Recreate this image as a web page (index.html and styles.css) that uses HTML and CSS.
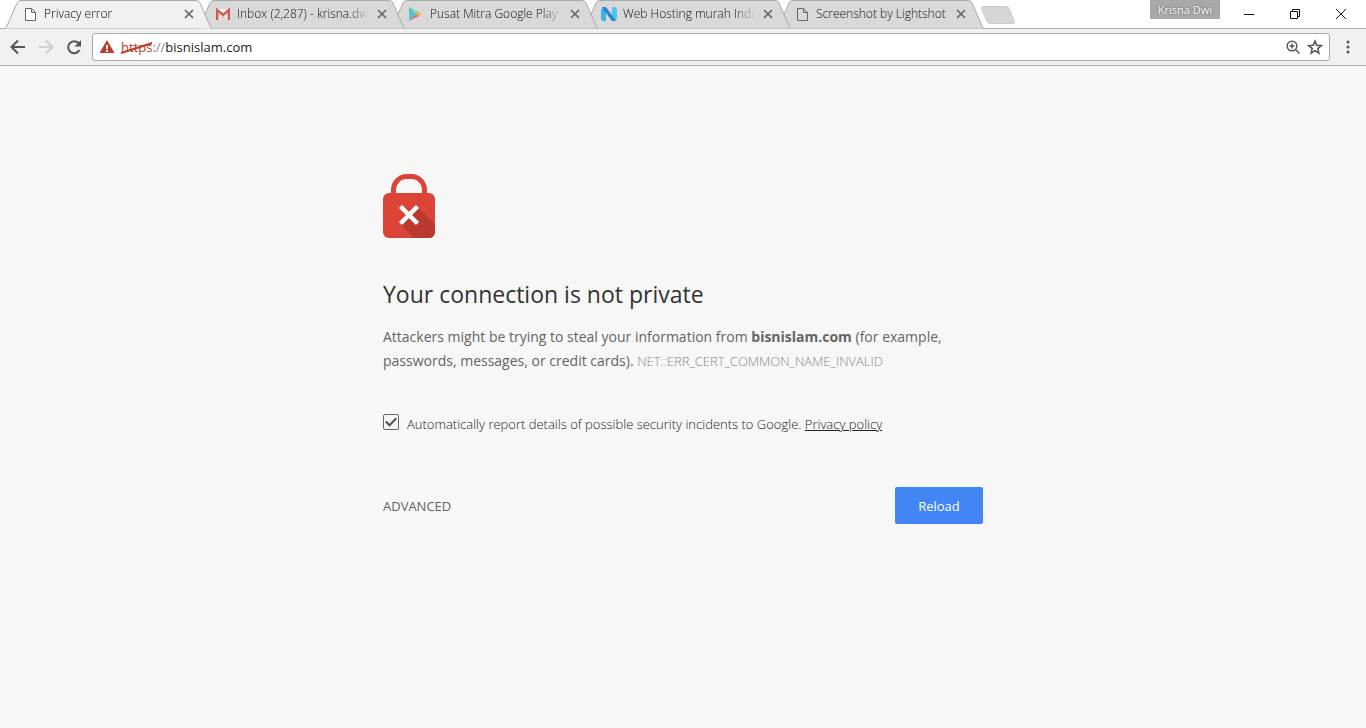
FILE: index.html
```html
<!DOCTYPE html>
<html lang="en">
	<head>
		<meta charset="utf-8">
		<title>Privacy error</title>
		<link rel="stylesheet" href="styles.css">
	</head>

	<body>
		<header class="browser">
			<div class="tab-strip">
				<div class="tabs">
					<div class="tab active">
						<svg class="tab-shape" viewBox="0 0 207 29" preserveAspectRatio="none"><path d="M0 28.5 Q1 28 2 26 L12 3 Q13 .5 16 .5 H191 Q194 .5 195 3 L205 26 Q206 28 207 28.5"/></svg>
						<svg class="icon page-icon" viewBox="0 0 16 16"><path d="M3.5 2.5h6l4 4v8h-10zM9.5 2.5v4h4"/></svg>
						<span class="tab-title">Privacy error</span>
						<button class="tab-close" aria-label="Close tab"><svg viewBox="0 0 16 16"><path d="M4 4l8 8M12 4l-8 8"/></svg></button>
					</div>
					<div class="tab">
						<svg class="tab-shape" viewBox="0 0 207 29" preserveAspectRatio="none"><path d="M0 28.5 Q1 28 2 26 L12 3 Q13 .5 16 .5 H191 Q194 .5 195 3 L205 26 Q206 28 207 28.5"/></svg>
						<svg class="icon" viewBox="0 0 16 16">
							<path fill="#f3efee" d="M2 3h12v11H2z"/>
							<path fill="#d7d2d1" d="M4 13l4-4 4 4z"/>
							<path fill="none" stroke="#d5584d" stroke-width="2.4" d="M2.2 14V4L8 9l5.800-5v10"/>
						</svg>
						<span class="tab-title">Inbox (2,287) - krisna.dwi</span>
						<button class="tab-close" aria-label="Close tab"><svg viewBox="0 0 16 16"><path d="M4 4l8 8M12 4l-8 8"/></svg></button>
					</div>
					<div class="tab">
						<svg class="tab-shape" viewBox="0 0 207 29" preserveAspectRatio="none"><path d="M0 28.5 Q1 28 2 26 L12 3 Q13 .5 16 .5 H191 Q194 .5 195 3 L205 26 Q206 28 207 28.5"/></svg>
						<svg class="icon" viewBox="0 0 16 16">
							<path fill="#4fc3cf" d="M1 1l7.500 7L1 15z"/>
							<path fill="#7fd6b4" d="M1 1l10 5-2.500 2.500z"/>
							<path fill="#e8665f" d="M1 15l10-5-2.500-2z"/>
							<path fill="#f3b95a" d="M11 5.500l3 2.500-3 2.500L8.500 8z"/>
						</svg>
						<span class="tab-title">Pusat Mitra Google Play |</span>
						<button class="tab-close" aria-label="Close tab"><svg viewBox="0 0 16 16"><path d="M4 4l8 8M12 4l-8 8"/></svg></button>
					</div>
					<div class="tab">
						<svg class="tab-shape" viewBox="0 0 207 29" preserveAspectRatio="none"><path d="M0 28.5 Q1 28 2 26 L12 3 Q13 .5 16 .5 H191 Q194 .5 195 3 L205 26 Q206 28 207 28.5"/></svg>
						<svg class="icon" viewBox="0 0 16 16">
							<path fill="#35b5e5" d="M0 3l5-2v14H2l-2-2z"/>
							<path fill="#4cc6e8" d="M11 1h3l2 2v10l-5 2z"/>
							<path fill="#2d7fd0" d="M1 1h4l10 14h-4L5 7z"/>
						</svg>
						<span class="tab-title">Web Hosting murah Indo</span>
						<button class="tab-close" aria-label="Close tab"><svg viewBox="0 0 16 16"><path d="M4 4l8 8M12 4l-8 8"/></svg></button>
					</div>
					<div class="tab">
						<svg class="tab-shape" viewBox="0 0 207 29" preserveAspectRatio="none"><path d="M0 28.5 Q1 28 2 26 L12 3 Q13 .5 16 .5 H191 Q194 .5 195 3 L205 26 Q206 28 207 28.5"/></svg>
						<svg class="icon page-icon" viewBox="0 0 16 16"><path d="M3.5 2.5h6l4 4v8h-10zM9.5 2.5v4h4"/></svg>
						<span class="tab-title short">Screenshot by Lightshot</span>
						<button class="tab-close" aria-label="Close tab"><svg viewBox="0 0 16 16"><path d="M4 4l8 8M12 4l-8 8"/></svg></button>
					</div>
				</div>
				<button class="new-tab" aria-label="New tab">
					<svg viewBox="0 0 36 18"><path d="M3 .5h23q2 0 3 2l5.500 13q.5 2-1.500 2H10q-2 0-3-2L1.500 2.500Q1 .5 3 .5z"/></svg>
				</button>

				<div class="window-controls">
					<button class="profile">Krisna Dwi</button>
					<button class="caption" aria-label="Minimize"><svg viewBox="0 0 12 12"><path d="M1 6.500h10"/></svg></button>
					<button class="caption" aria-label="Restore"><svg viewBox="0 0 12 12"><path d="M1.500 3.500h7v7h-7zM3.500 3.500v-2h7v7h-2"/></svg></button>
					<button class="caption" aria-label="Close"><svg viewBox="0 0 12 12"><path d="M1 1l10 10M11 1L1 11"/></svg></button>
				</div>
			</div>

			<div class="toolbar">
				<button class="tool" aria-label="Back"><svg viewBox="0 0 16 16"><path d="M15 8H2M8 1.500L1.500 8 8 14.500"/></svg></button>
				<button class="tool disabled" aria-label="Forward"><svg viewBox="0 0 16 16"><path d="M1 8h13M8 1.500L14.500 8 8 14.500"/></svg></button>
				<button class="tool" aria-label="Reload this page"><svg viewBox="0 0 16 16"><path d="M13.500 11A6 6 0 1 1 12.500 4L14 6"/><path class="solid" d="M15 1v6.500H8.500z"/></svg></button>
				<div class="omnibox">
					<svg class="warning" viewBox="0 0 16 16"><path fill="#c0392b" d="M8 1l7.500 13H.5z"/><path fill="#fff" d="M7 6h2v4H7zM7 11h2v2H7z"/></svg>
					<label class="scheme" for="address"><span class="https">https<svg class="strike" viewBox="0 0 32 12" preserveAspectRatio="none"><path d="M0 11L32 1"/></svg></span>://</label>
					<input id="address" class="address" type="text" value="bisnislam.com" spellcheck="false">
					<button class="box-button" aria-label="Zoom"><svg viewBox="0 0 16 16"><circle cx="7" cy="7" r="4.800"/><path d="M10.500 10.500l4 4M4.500 7h5M7 4.500v5"/></svg></button>
					<button class="box-button" aria-label="Bookmark this page"><svg viewBox="0 0 16 16"><path d="M8 2l1.700 4.200 4.600.4-3.500 3 1.100 4.500L8 11.700l-3.900 2.400 1.100-4.500-3.500-3 4.600-.4z"/></svg></button>
				</div>
				<button class="menu" aria-label="Menu"><svg viewBox="0 0 4 16"><circle cx="2" cy="3" r="1.500"/><circle cx="2" cy="8" r="1.500"/><circle cx="2" cy="13" r="1.500"/></svg></button>
			</div>
		</header>

		<main class="interstitial">
			<svg class="lock" viewBox="0 0 52 64">
				<path fill="none" stroke="#db4437" stroke-width="5" d="M10.500 22v-6a13 13.500 0 0 1 13-13.500h5a13 13.500 0 0 1 13 13.500v6"/>
				<rect y="19" width="52" height="45" rx="6" fill="#db4437"/>
				<path fill="#b9392e" d="M34 32.500l18 18V58a6 6 0 0 1-6 6H30.500L17 49.500z"/>
				<path fill="none" stroke="#fff" stroke-width="4.500" d="M17.500 32.500l17 17M34.500 32.500l-17 17"/>
			</svg>

			<h1>Your connection is not private</h1>
			<p class="message">Attackers might be trying to steal your information from <strong>bisnislam.com</strong> (for example, passwords, messages, or credit cards). <span class="error-code">NET::ERR_CERT_COMMON_NAME_INVALID</span></p>

			<div class="report">
				<input type="checkbox" id="opt-in" checked>
				<label for="opt-in">Automatically report details of possible security incidents to Google. <a href="#privacy">Privacy policy</a></label>
			</div>

			<div class="actions">
				<button class="details">ADVANCED</button>
				<button class="reload">Reload</button>
			</div>
		</main>
	</body>
</html>
```
FILE: styles.css
```css
* {
	box-sizing: border-box;
}
body {
	margin: 0;
	background: #f7f7f7;
	color: #646464;
	font-family: "Open Sans", "Noto Sans", sans-serif;
	font-size: 12px;
}
button {
	margin: 0;
	padding: 0;
	border: 0;
	background: none;
	color: inherit;
	font: inherit;
	cursor: pointer;
}
svg {
	display: block;
}

/* tab strip */
.tab-strip {
	display: flex;
	height: 29px;
	padding-left: 5px;
	background: #fff;
	box-shadow: inset 0 -1px #b0b0b0;
}
.tabs {
	display: flex;
	min-width: 0;
}
.tab {
	position: relative;
	isolation: isolate;
	display: flex;
	align-items: center;
	width: 207px;
	height: 29px;
	margin-right: -14px;
	padding: 0 15px 0 17px;
	border-bottom: 1px solid #b0b0b0;
	color: #111;
	font-weight: 300;
}
.tab:nth-child(1) { z-index: 5; }
.tab:nth-child(2) { z-index: 4; }
.tab:nth-child(3) { z-index: 3; }
.tab:nth-child(4) { z-index: 2; }
.tab.active {
	border-color: transparent;
	color: #000;
}
.tab-shape {
	position: absolute;
	z-index: -1;
	left: 0;
	top: 0;
	width: 207px;
	height: 29px;
	fill: #d9d9d9;
	stroke: #aaa;
}
.active .tab-shape {
	fill: #f1f1f1;
}
.icon {
	flex: none;
	width: 16px;
	height: 16px;
	margin-right: 6px;
}
.page-icon {
	fill: none;
	stroke: #666;
}
.active .page-icon {
	fill: #fff;
}
.tab-title {
	flex: 1;
	overflow: hidden;
	white-space: nowrap;
	line-height: 20px;
	-webkit-mask-image: linear-gradient(to right, #000 85%, transparent);
	mask-image: linear-gradient(to right, #000 85%, transparent);
}
.tab-title.short {
	-webkit-mask-image: none;
	mask-image: none;
}
.tab-close {
	flex: none;
	width: 16px;
	height: 16px;
	margin-left: 5px;
}
.tab-close svg {
	stroke: #666;
	stroke-width: 1.7;
}
.new-tab {
	flex: none;
	align-self: center;
	width: 36px;
	height: 18px;
	margin-left: 10px;
}
.new-tab svg {
	fill: #d6d6d6;
	stroke: #ccc;
}

/* window buttons */
.window-controls {
	display: flex;
	margin-left: auto;
	padding-right: 2px;
}
.profile {
	height: 19px;
	margin-right: 6px;
	padding: 0 8px;
	background: #a9a9a9;
	color: #fff;
	font-size: 11px;
	line-height: 18px;
	text-shadow: 0 0 2px #444;
}
.caption {
	width: 46px;
	height: 27px;
	padding: 0 17px;
}
.caption svg {
	width: 12px;
	height: 12px;
	fill: none;
	stroke: #111;
}

/* toolbar */
.toolbar {
	display: flex;
	align-items: center;
	height: 37px;
	padding: 0 10px;
	background: #f1f1f1;
	border-bottom: 1px solid #b6b6b6;
}
.tool {
	width: 16px;
	height: 16px;
	margin-right: 12px;
}
.tool svg {
	fill: none;
	stroke: #555;
	stroke-width: 2;
}
.tool.disabled svg {
	stroke: #d0d0d0;
}
.tool .solid {
	fill: #555;
	stroke: none;
}
.omnibox {
	display: flex;
	flex: 1;
	align-items: center;
	height: 28px;
	margin: 0 16px 0 -2px;
	padding: 0 6px;
	background: #fff;
	border: 1px solid #a9a9a9;
	border-radius: 3px;
	font-size: 13px;
}
.warning {
	width: 16px;
	height: 16px;
	margin-right: 6px;
}
.scheme {
	color: #888;
}
.https {
	position: relative;
	color: #c0392b;
}
.strike {
	position: absolute;
	left: 0;
	top: 4px;
	width: 100%;
	height: 12px;
	stroke: #c0392b;
	stroke-width: 2;
}
.address {
	flex: 1;
	min-width: 0;
	padding: 0;
	border: 0;
	outline: 0;
	background: none;
	color: #222;
	font: inherit;
}
.box-button {
	width: 16px;
	height: 16px;
	margin-left: 6px;
}
.box-button svg {
	fill: none;
	stroke: #555;
	stroke-width: 1.5;
}
.menu {
	width: 4px;
	height: 16px;
	margin-right: 6px;
}
.menu svg {
	fill: #555;
}

/* warning page */
.interstitial {
	max-width: 600px;
	margin: 0 auto;
	padding-top: 108px;
}
.lock {
	width: 52px;
	height: 64px;
	margin-bottom: 40px;
}
h1 {
	margin: 0 0 15px;
	color: #333;
	font-size: 23px;
	font-weight: 400;
	line-height: 32px;
}
.message {
	margin: 0 0 41px;
	font-size: 14px;
	line-height: 24px;
}
.error-code {
	color: #888;
	font-size: 13px;
	font-weight: 300;
}
.report {
	display: flex;
	align-items: center;
	color: #222;
	font-size: 13px;
	font-weight: 300;
	line-height: 20px;
}
.report input {
	display: grid;
	place-items: center;
	flex: none;
	width: 16px;
	height: 16px;
	margin: 0 8px 4px 0;
	border: 1px solid #666;
	border-radius: 2px;
	appearance: none;
}
.report input:checked::after {
	content: "";
	width: 12px;
	height: 12px;
	background: #555;
	clip-path: polygon(0 52%, 14% 40%, 38% 64%, 88% 12%, 100% 25%, 38% 90%);
}
.report a {
	color: inherit;
}
.actions {
	display: flex;
	align-items: center;
	justify-content: space-between;
	margin-top: 53px;
	font-size: 13px;
}
.reload {
	width: 88px;
	height: 37px;
	background: #4285f4;
	border-radius: 2px;
	color: #fff;
}
```
